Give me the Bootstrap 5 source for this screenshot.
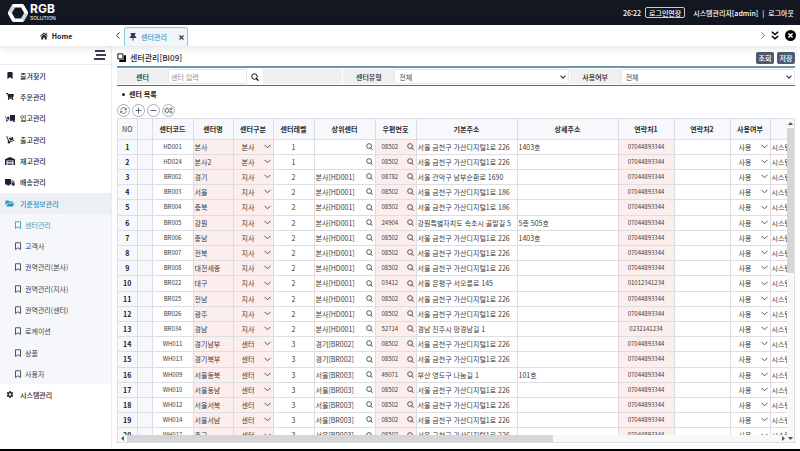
<!DOCTYPE html>
<html lang="ko">
<head>
<meta charset="utf-8">
<meta name="viewport" content="width=device-width, initial-scale=1">
<title>센터관리[BI09]</title>
<link rel="stylesheet" href="https://cdn.jsdelivr.net/npm/bootstrap@5.3.0/dist/css/bootstrap.min.css">
<style>
:root { --ink: #1c2233; --accent: #2591bd; --line: #dcdee1; }
body { font: 7px/10px "Noto Sans CJK KR", "Noto Sans", sans-serif; color: #333; background: #fff; border-bottom: 2px solid #000; }
svg { display: block; fill: currentColor; flex: none; }
.ln { fill: none; stroke: currentColor; }
a { color: inherit; text-decoration: none; }
button { border: 0; background: none; padding: 0; color: inherit; font: inherit; display: flex; align-items: center; justify-content: center; }
.topbar { height: 25px; background: #131722; color: #fff; padding: 0 6px 0 8px; font-weight: 500; }
.brand { gap: 2px; }
.brand-name { font: 700 12px/12px Inter, sans-serif; }
.brand-sub { font: 400 5px/7px Inter, sans-serif; }
.extend { border: 1px solid #c8cad0; border-radius: 2px; height: 11px; padding: 0 3px; }
.tabbar { height: 21px; position: relative; z-index: 1; box-shadow: 0 2px 8px rgba(0,0,0,.12); }
.side-w { width: 112px; }
.home { color: var(--ink); font-weight: 700; }
.tab-item { height: 19px; width: 64px; border: 1px solid #86c8e2; border-bottom: 0; border-radius: 3px 3px 0 0; background: #f2f5fa; color: #34384a; padding: 0 3px 0 4px; }
.tab-item a { color: #2ba0cf; font-weight: 500; }
.tab-tools { gap: 6px; }
.side { border-right: 1px solid #eaecef; }
.side-head { height: 19px; border-bottom: 1px solid #eaecef; padding-right: 5px; color: #3b3f52; }
.menu { list-style: none; margin: 0; padding: 0; }
.menu a { display: flex; align-items: center; height: 21px; padding-left: 5px; color: var(--ink); font-weight: 500; }
.menu > li:nth-child(3n) > a, .submenu > li:nth-child(3n) > a { height: 22px; }
.menu a svg { width: 10px; margin-right: 5px; }
.menu a.open { background: #ecf0f5; color: var(--accent); }
.submenu { list-style: none; margin: 0; padding: 0; background: #f5f7fb; }
.menu .submenu a { padding-left: 13px; color: #3d4250; font-weight: 400; }
.menu .submenu a svg { margin-right: 2px; }
.menu .submenu a.current { color: #3c9bc4; }
.main { padding: 0 5px 6px; }
.title-row { height: 20px; padding-top: 3px; }
h1 { font-size: 8px; line-height: 12px; font-weight: 500; color: #2b2f3c; margin: 0 0 0 4px; }
.acts { gap: 3px; }
.act { height: 12px; width: 18px; border-radius: 2px; background: #4c5b72; color: #fff; font-weight: 500; }
.filters { border-top: 2px solid #6e98aa; border-bottom: 1px solid #44718a; height: 20px; padding: 1px 0; gap: 1px; }
.filter-cell { flex: 1 1 0; min-width: 0; }
.filter-label { width: 51px; background: #f0f0f0; color: #222; font-weight: 500; display: flex; align-items: center; justify-content: center; }
.field { border: 1px solid #e6e7ea; border-radius: 1px; background: #fff; font-size: 7px; line-height: 10px; color: #444; padding: 0 2px; min-width: 0; outline: 0; }
.field::placeholder { color: #8a8d93; }
input.field { width: 79px; }
select { appearance: none; }
select.field { padding-left: 4px; background: #fff url("data:image/svg+xml,%3Csvg xmlns='http://www.w3.org/2000/svg' viewBox='0 0 6 4'%3E%3Cpath d='M.5.6 3 3.1 5.5.6' fill='none' stroke='%23333a4a' stroke-width='1.1'/%3E%3C/svg%3E") no-repeat right 2px center / 6px 4px; }
.list-title { color: #222; font-weight: 700; height: 16px; padding: 0 0 0 5px; gap: 4px; font-size: 7px; margin: 0; line-height: 10px; }
.bullet { width: 3px; height: 3px; border-radius: 50%; background: #222; }
.tools { gap: 2px; height: 16px; }
.tools button { width: 13px; height: 13px; border: 1px solid #a9adb5; border-radius: 50%; color: #5d6675; }
.sheet { border: 1px solid var(--line); }
.sheet-view { overflow: hidden; }
table { table-layout: fixed; width: 694px; border-collapse: collapse; color: #3a3a3a; }
th, td { border: 1px solid var(--line); padding: 0; overflow: hidden; white-space: nowrap; text-align: center; line-height: 10px; }
tr > :first-child { border-left: 0; }
thead th { border-top: 0; height: 20px; background: #f6f8fc; font-weight: 700; color: #2c2c2c; }
thead th.plain { font-weight: 400; }
tbody tr { height: 15px; }
tbody tr:nth-child(5n) { height: 16px; }
tbody th { background: #f6f8fc; font-weight: 700; color: #222; }
.fixed-col { background: #f6f8fc; }
.need { background: #fdeeee; }
.start { text-align: left; padding-left: 1px; }
.num { font-size: 6px; }
.pick { display: flex; align-items: center; justify-content: space-between; padding: 0 2px 0 1px; }
.zip { padding-left: 6px; }
td select { display: block; width: 100%; border: 0; padding: 0 10px 0 0; font-size: 7px; line-height: 10px; height: 12px; color: inherit; text-align: center; text-align-last: center; background: transparent url("data:image/svg+xml,%3Csvg xmlns='http://www.w3.org/2000/svg' viewBox='0 0 7 5'%3E%3Cpath d='M.5.8l3 3 3-3' fill='none' stroke='%23444' stroke-width='.9'/%3E%3C/svg%3E") no-repeat right 2px center / 7px 5px; }
.bar-v { width: 7px; background: #f8f8f8; }
.bar-h { height: 7px; background: #f8f8f8; }
.bar-v svg, .bar-h svg { color: #555; margin: 1px; }
.thumb-v { height: 46%; background: #d6d6d6; }
.thumb-h { width: 63%; background: #d6d6d6; }
</style>
<script src="https://cdn.jsdelivr.net/npm/bootstrap@5.3.0/dist/js/bootstrap.bundle.min.js"></script>
</head>
<body class="d-flex flex-column vh-100 overflow-hidden">
<svg class="d-none">
  <symbol id="i-bm" viewBox="0 0 16 16"><path d="M2 16V2q0-2 2-2h8q2 0 2 2v14l-6-4z"/></symbol>
  <symbol id="i-bmo" viewBox="0 0 16 16"><path d="M3 15V1.500h10V15L8 11.500z" fill="none" stroke="currentColor" stroke-width="1.800"/></symbol>
  <symbol id="i-mag" viewBox="0 0 16 16"><circle cx="7" cy="7" r="5.500" fill="none" stroke="currentColor" stroke-width="1.900"/><path d="M10.500 11l4.500 4.500" fill="none" stroke="currentColor" stroke-width="2.200"/></symbol>
</svg>

<header class="topbar d-flex flex-shrink-0 align-items-center justify-content-between">
  <a href="#" class="brand d-flex align-items-center">
    <svg width="20" height="18" viewBox="0 0 20 18"><path fill="#fff" fill-rule="evenodd" d="M5.500 0h9q1 0 1.500 1l4 7q.5 1 0 2l-4 7q-.5 1-1.500 1h-9Q4.500 18 4 17L0 10Q-.5 9 0 8L4 1Q4.500 0 5.500 0zM7 3.500 3.800 9 7 14.500h6L16.200 9 13 3.500z"/><path fill="#9a9da6" d="M4 1 7 3.500 3.800 9 0 8zM16 17l-3-2.500L16.200 9l3.800 1z" opacity=".45"/></svg>
    <span class="d-flex flex-column"><span class="brand-name">RGB</span><span class="brand-sub">SOLUTION</span></span>
  </a>
  <div class="d-flex align-items-center">
    <span>26:22</span>
    <button type="button" class="extend ms-1 me-2">로그인연장</button>
    <span>시스템관리자[admin]</span><span class="mx-1">|</span><a href="#">로그아웃</a>
  </div>
</header>

<nav class="tabbar d-flex flex-shrink-0 bg-white">
  <a href="#" class="home side-w d-flex align-items-center justify-content-center gap-1">
    <svg width="8" height="8" viewBox="0 0 16 16"><path d="M8 1 0 8l1 1.200L8 3.300l7 5.900L16 8l-2.500-2.200V2h-2v2zM2.500 9.300V15h4v-4h3v4h4V9.300L8 4.700z"/></svg>Home</a>
  <div class="d-flex align-items-end flex-grow-1">
    <button type="button" class="h-100 px-1" aria-label="이전 탭"><svg class="ln" width="4" height="7" viewBox="0 0 4 7"><path d="M3.500.5l-3 3 3 3"/></svg></button>
    <div class="tab-item d-flex align-items-center">
      <svg width="8" height="8" viewBox="0 0 16 16"><path d="M3 0h10v2.500h-1.500l.5 3.500Q15 7.500 15 10H9v4l-1 2-1-2v-4H1q0-2.500 3-4l.5-3.500H3z"/></svg>
      <a href="#" class="mx-auto text-nowrap">센터관리</a>
      <button type="button" class="ms-2" aria-label="탭 닫기"><svg class="ln" width="5" height="5" viewBox="0 0 5 5"><path d="M.5.5l4 4M4.500.5l-4 4" stroke-width="1.200"/></svg></button>
    </div>
  </div>
  <div class="tab-tools d-flex align-items-center pe-1 text-black">
    <button type="button" class="text-secondary" aria-label="다음 탭"><svg class="ln" width="4" height="7" viewBox="0 0 4 7"><path d="M.5.5l3 3-3 3"/></svg></button>
    <button type="button" aria-label="탭 목록"><svg class="ln" width="8" height="9" viewBox="0 0 8 9"><path d="M.8.8 4 3.500 7.200.8M.8 5 4 7.700 7.200 5" stroke-width="1.500"/></svg></button>
    <button type="button" aria-label="모두 닫기"><svg width="11" height="11" viewBox="0 0 16 16"><circle cx="8" cy="8" r="8"/><path d="M5 5l6 6M11 5l-6 6" stroke="#fff" stroke-width="2.300"/></svg></button>
  </div>
</nav>

<div class="d-flex flex-grow-1 overflow-hidden">
  <aside class="side side-w flex-shrink-0">
    <div class="side-head d-flex align-items-center justify-content-end">
      <button type="button" aria-label="메뉴 접기"><svg width="12" height="10" viewBox="0 0 12 10"><path d="M1 0h10v2H1zM2 4h10v2H2zM0 8h11v2H0z"/></svg></button>
    </div>
    <ul class="menu">
      <li><a href="#"><svg height="7"><use href="#i-bm"/></svg>즐겨찾기</a></li>
      <li><a href="#"><svg height="7" viewBox="0 0 576 512"><path d="M528 301l47-208c4-15-8-29-23-29H159l-9-45C148 8 138 0 127 0H24C11 0 0 11 0 24v16c0 13 11 24 24 24h70l70 343c-17 10-28 28-28 49 0 31 25 56 56 56s56-25 56-56c0-16-6-30-17-40h210c-10 10-17 24-17 40 0 31 25 56 56 56s56-25 56-56c0-22-13-41-32-50l6-25c3-15-8-29-24-29H218l-6-32h293c11 0 21-8 23-19z"/></svg>주문관리</a></li>
      <li><a href="#"><svg height="7" viewBox="0 0 20 14"><path d="M10 0h10v10h-2a2 2 0 0 1 0 4 2 2 0 0 1-2-3h-2a2 2 0 1 1-4-1zM4 4l4-1 1 5-4 1zM0 3h2l2 7 5-1v1l-4 1a1.500 1.500 0 1 1-2-1L1 4H0z"/></svg>입고관리</a></li>
      <li><a href="#"><svg height="8" viewBox="0 0 18 16"><path d="M1 1h3l3 9a2.500 2.500 0 1 1-2 1L3 2.500H1zM7 4l3-1 .6 2 1.500-.5L11.500 2.500l3-1L16 7l-7 2.400zM9 11l8-3 .5 1.300-8 3z"/></svg>출고관리</a></li>
      <li><a href="#"><svg height="8" viewBox="0 0 20 16"><path d="M10 0l9 4q1 .5 1 1.500V16h-3V7H3v9H0V5.500Q0 4.500 1 4zM5 8.500h10V10H5zM5 11.500h10V13H5zM5 14.500h10V16H5z"/></svg>재고관리</a></li>
      <li><a href="#"><svg height="7" viewBox="0 0 20 14"><path d="M0 0h12v11H9a2.500 2.500 0 1 1-5 0H0zM13 3h3.500L19 6v4h1v1h-1a2.500 2.500 0 1 1-5 0h-1zM14.300 4.300V7H18l-2-2.700z" fill-rule="evenodd"/></svg>배송관리</a></li>
      <li><a href="#" class="open"><svg height="7" viewBox="0 0 18 14"><path d="M0 11V2q0-1 1-1h5l2 2h6q1 0 1 1v1.500H5q-1 0-1.500 1zM5 7h13l-3 5q-.5 1-1.500 1H1.500z"/></svg>기준정보관리</a>
        <ul class="submenu">
          <li><a href="#" class="current"><svg height="8"><use href="#i-bmo"/></svg>센터관리</a></li>
          <li><a href="#"><svg height="8"><use href="#i-bmo"/></svg>고객사</a></li>
          <li><a href="#"><svg height="8"><use href="#i-bmo"/></svg>권역관리(본사)</a></li>
          <li><a href="#"><svg height="8"><use href="#i-bmo"/></svg>권역관리(지사)</a></li>
          <li><a href="#"><svg height="8"><use href="#i-bmo"/></svg>권역관리(센터)</a></li>
          <li><a href="#"><svg height="8"><use href="#i-bmo"/></svg>로케이션</a></li>
          <li><a href="#"><svg height="8"><use href="#i-bmo"/></svg>상품</a></li>
          <li><a href="#"><svg height="8"><use href="#i-bmo"/></svg>사용자</a></li>
        </ul>
      </li>
      <li><a href="#"><svg height="7" viewBox="0 0 16 16"><path fill-rule="evenodd" d="M6.500 0h3l.5 2.300 1.500.9 2.300-.8 1.500 2.700-1.700 1.600v2.600l1.700 1.600-1.500 2.700-2.300-.8-1.500.9-.5 2.300h-3L6 13.700l-1.500-.9-2.300.8L.7 10.900l1.700-1.600V6.700L.7 5.100l1.500-2.700 2.300.8L6 2.300zM8 5.300a2.700 2.700 0 1 0 0 5.400 2.700 2.700 0 0 0 0-5.400z"/></svg>시스템관리</a></li>
    </ul>
  </aside>

  <main class="main d-flex flex-column flex-grow-1 overflow-hidden">
    <div class="title-row d-flex flex-shrink-0 align-items-center">
      <svg width="9" height="9" viewBox="0 0 16 16" class="text-black"><path d="M1.500 1.500h9v9h-9z" fill="#fff" stroke="currentColor" stroke-width="1.600"/><path d="M12 4h4v12H4v-4h8z"/></svg>
      <h1>센터관리[BI09]</h1>
      <div class="acts d-flex ms-auto">
        <button type="button" class="act">조회</button><button type="button" class="act">저장</button>
      </div>
    </div>

    <form class="filters d-flex flex-shrink-0">
      <div class="filter-cell d-flex">
        <label class="filter-label" for="center">센터</label>
        <input class="field" id="center" type="text" placeholder="센터 입력">
        <button type="button" class="px-1 text-black" aria-label="센터 검색"><svg width="8" height="8"><use href="#i-mag"/></svg></button>
        <div class="filter-label flex-grow-1"></div>
      </div>
      <div class="filter-cell d-flex">
        <label class="filter-label" for="kind">센터유형</label>
        <select class="field flex-grow-1" id="kind"><option>전체</option></select>
      </div>
      <div class="filter-cell d-flex">
        <label class="filter-label" for="use">사용여부</label>
        <select class="field flex-grow-1" id="use"><option>전체</option></select>
      </div>
    </form>

    <h2 class="list-title d-flex flex-shrink-0 align-items-center"><span class="bullet"></span>센터 목록</h2>
    <div class="tools d-flex flex-shrink-0 align-items-center">
      <button type="button" aria-label="새로고침"><svg class="ln" width="7" height="7" viewBox="0 0 16 16" stroke-width="1.900"><path d="M2 7a6 6 0 0 1 11-3l1.500 2M14.500 1.500V6H10M14 9a6 6 0 0 1-11 3l-1.500-2M1.500 14.500V10H6"/></svg></button>
      <button type="button" aria-label="추가"><svg class="ln" width="7" height="7" viewBox="0 0 7 7"><path d="M3.500.5v6M.5 3.500h6"/></svg></button>
      <button type="button" aria-label="삭제"><svg class="ln" width="7" height="7" viewBox="0 0 7 7"><path d="M.5 3.500h6"/></svg></button>
      <button type="button" aria-label="설정"><svg class="ln" width="9" height="7" viewBox="0 0 18 14" stroke-width="1.800"><circle cx="6" cy="7" r="3.800"/><path d="M6 .8v2.400M6 10.800v2.400M.8 4l2 1.200M.8 10l2-1.200M11.200 4l-2 1.200M11.200 10l-2-1.200"/><circle cx="14.500" cy="3.500" r="2"/><circle cx="14.500" cy="10.500" r="2"/></svg></button>
    </div>

    <section class="sheet d-flex flex-column flex-grow-1 overflow-hidden">
      <div class="d-flex flex-grow-1 overflow-hidden">
        <div class="sheet-view flex-grow-1">
          <table>
            <colgroup id="cols"></colgroup>
            <thead><tr><th class="plain">NO</th><th></th><th>센터코드</th><th>센터명</th><th>센터구분</th><th>센터레벨</th><th>상위센터</th><th>우편번호</th><th>기본주소</th><th>상세주소</th><th>연락처1</th><th>연락처2</th><th>사용여부</th><th></th></tr></thead>
            <tbody id="rows"></tbody>
          </table>
        </div>
        <div class="bar-v d-flex flex-column flex-shrink-0">
          <svg width="5" height="7" viewBox="0 0 5 7"><path d="M0 5 2.500 2 5 5z"/></svg>
          <div class="thumb-v"></div>
        </div>
      </div>
      <div class="bar-h d-flex flex-shrink-0">
        <svg width="7" height="5" viewBox="0 0 7 5"><path d="M5 0v5L2 2.500z"/></svg>
        <div class="thumb-h"></div>
        <svg class="ms-auto" width="5" height="5" viewBox="0 0 5 5"><path d="M1 0v5l3-2.500z"/></svg>
        <svg width="5" height="5" viewBox="0 0 5 5"><path d="M0 1h5L2.500 4z"/></svg>
      </div>
    </section>
  </main>
</div>

<script>
const widths = [19, 15, 41, 40, 40, 41, 61, 41, 101, 101, 56, 56, 40, 42];
const GS = '서울 금천구 가산디지털1로 ';
const TEL = '07044893344';
// code, name, kind, level, parent, zip, address, detail, phone
const data = [
  ['HD001', '본사', '본사', 1, '', '08502', GS + '226', '1403호', TEL],
  ['HD024', '본사2', '본사', 1, '', '08502', GS + '226', '', TEL],
  ['BR002', '경기', '지사', 2, '본사[HD001]', '08782', '서울 관악구 남부순환로 1690', '', TEL],
  ['BR003', '서울', '지사', 2, '본사[HD001]', '08502', GS + '186', '', TEL],
  ['BR004', '충북', '지사', 2, '본사[HD001]', '08502', GS + '186', '', TEL],
  ['BR005', '강원', '지사', 2, '본사[HD001]', '24904', '강원특별자치도 속초시 골말길 5', '5층 505호', TEL],
  ['BR006', '충남', '지사', 2, '본사[HD001]', '08502', GS + '226', '1403호', TEL],
  ['BR007', '전북', '지사', 2, '본사[HD001]', '08502', GS + '226', '', TEL],
  ['BR008', '대전세종', '지사', 2, '본사[HD001]', '08502', GS + '226', '', TEL],
  ['BR022', '대구', '지사', 2, '본사[HD001]', '03412', '서울 은평구 서오릉로 145', '', '01012341234'],
  ['BR025', '전남', '지사', 2, '본사[HD001]', '08502', GS + '226', '', TEL],
  ['BR026', '광주', '지사', 2, '본사[HD001]', '08502', GS + '226', '', TEL],
  ['BR034', '경남', '지사', 2, '본사[HD001]', '52714', '경남 진주시 망경남길 1', '', '0232141234'],
  ['WH011', '경기남부', '센터', 3, '경기[BR002]', '08502', GS + '226', '', TEL],
  ['WH013', '경기북부', '센터', 3, '경기[BR002]', '08502', GS + '226', '', TEL],
  ['WH009', '서울동북', '센터', 3, '서울[BR003]', '49071', '부산 영도구 나눔길 1', '101호', TEL],
  ['WH010', '서울동남', '센터', 3, '서울[BR003]', '08502', GS + '226', '', TEL],
  ['WH012', '서울서북', '센터', 3, '서울[BR003]', '08502', GS + '226', '', TEL],
  ['WH014', '서울서남', '센터', 3, '서울[BR003]', '08502', GS + '226', '', TEL],
  ['WH017', '중구', '센터', 3, '서울[BR003]', '08502', GS + '226', '', TEL]
];
const find = label => `<button type="button" aria-label="${label}"><svg width="7" height="7"><use href="#i-mag"/></svg></button>`;
document.getElementById('cols').innerHTML = widths.map(w => `<col style="width:${w}px">`).join('');
document.getElementById('rows').innerHTML = data.map((r, i) => `<tr><th>${i + 1}</th><td class="fixed-col"></td>
<td class="num">${r[0]}</td><td class="need start">${r[1]}</td>
<td class="need"><select aria-label="센터구분"><option>${r[2]}</option></select></td><td>${r[3]}</td>
<td><div class="pick"><span>${r[4]}</span>${find('상위센터 검색')}</div></td>
<td class="need"><div class="pick zip"><span class="num">${r[5]}</span>${find('우편번호 검색')}</div></td>
<td class="start">${r[6]}</td><td class="start">${r[7]}</td><td class="need num">${r[8]}</td><td></td>
<td><select aria-label="사용여부"><option>사용</option></select></td><td class="start">시스템관리자</td></tr>`).join('');
</script>
</body>
</html>
